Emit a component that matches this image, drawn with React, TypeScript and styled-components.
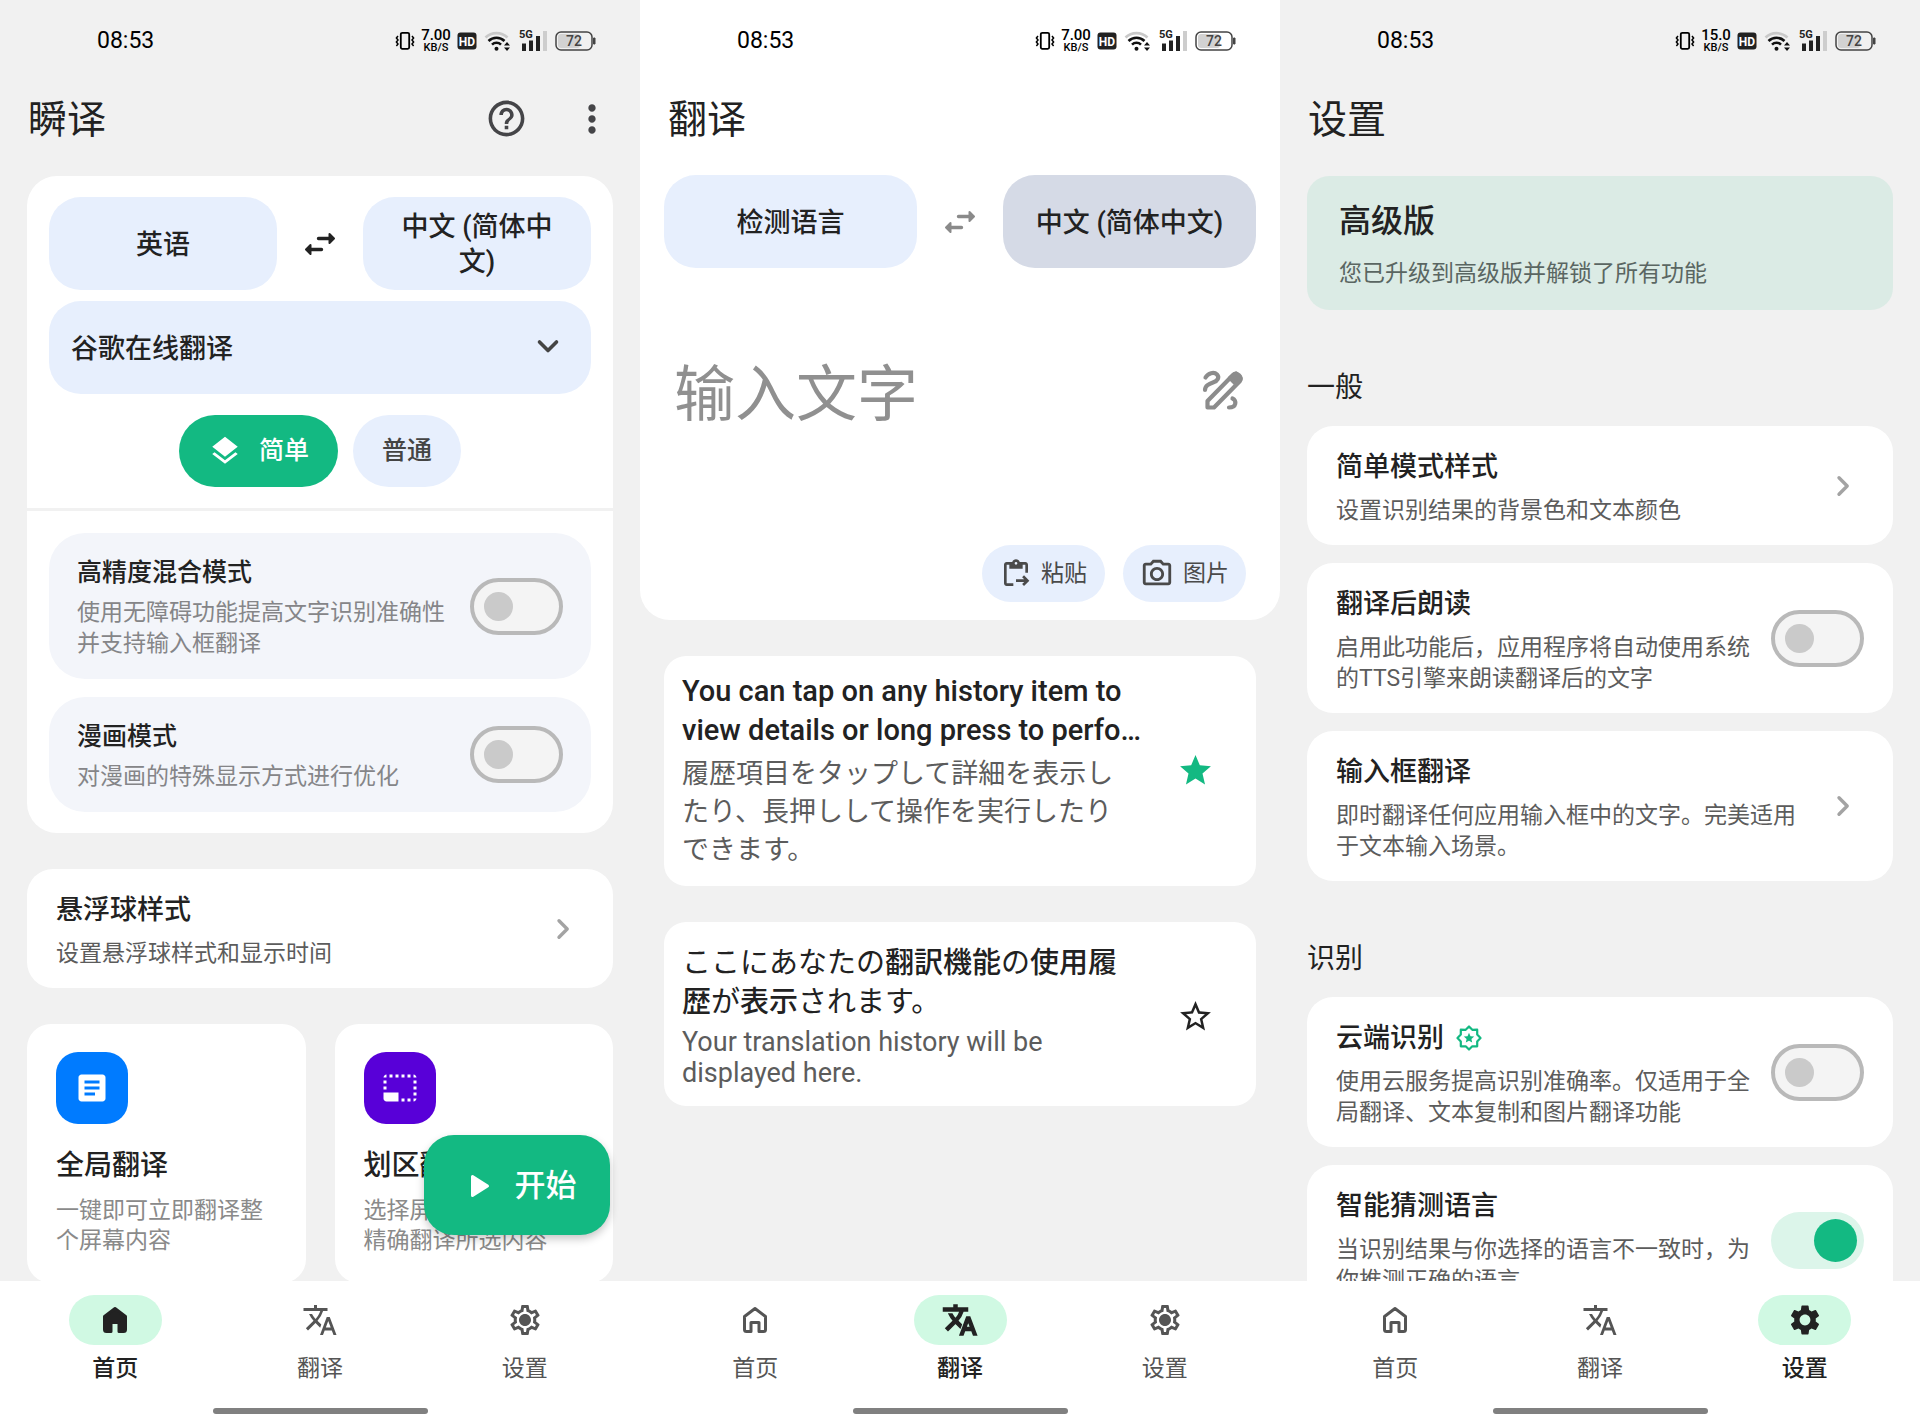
import React from 'react';
import styled, { createGlobalStyle, css } from 'styled-components';
import {
  MdArticle,
  MdContentPasteGo,
  MdHelpOutline,
  MdLayers,
  MdMoreVert,
  MdOutlinePhotoCamera,
  MdOutlineSettings,
  MdPhotoSizeSelectSmall,
  MdSettings,
  MdStar,
  MdStarBorder,
  MdTranslate,
} from 'react-icons/md';

const color = {
  page: '#f1f1f1',
  surface: '#ffffff',
  tint: '#e7effd',
  tintDim: '#d5dae6',
  soft: '#f3f5fa',
  green: '#13b982',
  mint: '#d0f9e3',
  ink: '#222222',
  body: '#5c5c5c',
  muted: '#858588',
  hint: '#909090',
};

const GlobalStyle = createGlobalStyle`
  *, *::before, *::after { box-sizing: border-box; }
  body {
    margin: 0;
    background: ${color.page};
    color: ${color.ink};
    font-family: Roboto, 'Noto Sans CJK SC', sans-serif;
  }
  button, input, select, textarea { font: inherit; color: inherit; }
  button { border: 0; padding: 0; background: none; cursor: pointer; }
  h1, h2, h3, p { margin: 0; font-weight: 400; }
  svg { display: block; flex: none; }
`;

/* ---------- shell ---------- */

const Screens = styled.main`
  display: grid;
  grid-template-columns: repeat(3, minmax(0, 1fr));
  height: 100vh;
`;

const Phone = styled.section`
  position: relative;
  display: flex;
  flex-direction: column;
  min-height: 0;
  background: ${color.page};
`;

const Top = styled.div<{ $white?: boolean }>`
  flex: none;
  background: ${(p) => (p.$white ? color.surface : 'transparent')};
`;

const StatusBar = styled.div`
  display: flex;
  align-items: center;
  justify-content: space-between;
  height: 82px;
  padding: 0 44px 0 97px;
  color: #000;
`;

const Clock = styled.time`
  font-size: 23px;
  line-height: 28px;
`;

const StatusIcons = styled.div`
  display: flex;
  align-items: center;
  gap: 7px;
`;

const Speed = styled.div`
  display: flex;
  flex-direction: column;
  align-items: center;
  width: 28px;
  font-weight: 500;
  font-size: 15px;
  line-height: 14px;
  small {
    font-size: 11px;
    line-height: 12px;
  }
`;

const Header = styled.header`
  display: flex;
  align-items: center;
  height: 76px;
  padding: 0 26px 0 28px;
`;

const Title = styled.h1`
  flex: 1;
  font-size: 39px;
  line-height: 48px;
`;

const IconButton = styled.button`
  display: flex;
  align-items: center;
  justify-content: center;
  color: #454548;
`;

const HeaderActions = styled.div`
  display: flex;
  align-items: center;
  gap: 42px;
  padding-bottom: 3px;
`;

const Content = styled.div<{ $gap?: number }>`
  flex: 1;
  display: flex;
  flex-direction: column;
  gap: ${(p) => p.$gap ?? 36}px;
  min-height: 0;
  padding: 18px 27px 0;
  overflow: hidden auto;
  scrollbar-width: none;
`;

/* ---------- navigation ---------- */

const Nav = styled.nav`
  flex: none;
  display: flex;
  flex-wrap: wrap;
  align-content: flex-start;
  height: 142px;
  padding: 14px 13px 0;
  background: ${color.surface};
`;

const NavItem = styled.a<{ $active?: boolean }>`
  flex: 1 0 33%;
  display: flex;
  flex-direction: column;
  align-items: center;
  gap: 8px;
  height: 94px;
  color: ${(p) => (p.$active ? color.ink : '#555')};
  text-decoration: none;
  font-size: 23px;
  line-height: 32px;
  font-weight: ${(p) => (p.$active ? 500 : 400)};
`;

const NavPill = styled.span<{ $active?: boolean }>`
  display: flex;
  align-items: center;
  justify-content: center;
  width: 93px;
  height: 50px;
  border-radius: 25px;
  background: ${(p) => (p.$active ? color.mint : 'transparent')};
  path[fill='none'] {
    stroke: none;
  }
`;

const HomeIndicator = styled.div`
  width: 215px;
  height: 6px;
  margin: 19px auto 0;
  border-radius: 3px;
  background: #808080;
`;

/* ---------- shared controls ---------- */

const LangRow = styled.div`
  display: grid;
  grid-template-columns: minmax(0, 1fr) 86px minmax(0, 1fr);
  align-items: center;
`;

const LangButton = styled.button<{ $dim?: boolean }>`
  height: 93px;
  padding: 3px 32px 0;
  border-radius: 32px;
  background: ${(p) => (p.$dim ? color.tintDim : color.tint)};
  font-weight: 500;
  font-size: 27px;
  line-height: 35px;
`;

const SwapButton = styled.button<{ $muted?: boolean }>`
  display: flex;
  justify-content: center;
  color: ${(p) => (p.$muted ? '#8a8a8a' : color.ink)};
`;

const Switch = styled.input`
  appearance: none;
  flex: none;
  display: flex;
  align-items: center;
  width: 93px;
  height: 57px;
  margin: 0;
  padding: 0 10px;
  border: 4px solid #b9b9b9;
  border-radius: 29px;
  background: #f4f4f4;
  &::before {
    content: '';
    width: 29px;
    height: 29px;
    border-radius: 50%;
    background: #cacaca;
  }
  &:checked {
    justify-content: flex-end;
    padding: 0 7px;
    border: 0;
    background: #dcf5ea;
  }
  &:checked::before {
    width: 43px;
    height: 43px;
    background: ${color.green};
  }
`;

/* ---------- home screen ---------- */

const Panel = styled.section`
  flex: none;
  border-radius: 30px;
  background: ${color.surface};
`;

const PanelTop = styled.div`
  display: flex;
  flex-direction: column;
  padding: 21px 22px 21px;
  border-bottom: 3px solid ${color.page};
`;

const PanelBottom = styled.div`
  display: flex;
  flex-direction: column;
  gap: 18px;
  padding: 22px 22px 21px;
`;

const EngineBox = styled.label`
  position: relative;
  display: block;
  margin: 11px 0 21px;
  svg {
    position: absolute;
    top: 33px;
    right: 31px;
    color: #444;
    pointer-events: none;
  }
`;

const EngineSelect = styled.select`
  appearance: none;
  display: block;
  width: 100%;
  height: 93px;
  padding: 3px 22px 0;
  border: 0;
  border-radius: 32px;
  background: ${color.tint};
  font-weight: 500;
  font-size: 27px;
  line-height: 36px;
`;

const Modes = styled.div`
  display: flex;
  justify-content: center;
  gap: 15px;
`;

const ModeButton = styled.button<{ $active?: boolean }>`
  display: flex;
  align-items: center;
  gap: 17px;
  height: 72px;
  padding: 0 29px;
  border-radius: 36px;
  background: ${(p) => (p.$active ? color.green : color.tint)};
  color: ${(p) => (p.$active ? '#fff' : '#444')};
  font-weight: 500;
  font-size: 25px;
  line-height: 34px;
`;

const OptionBox = styled.label`
  display: flex;
  align-items: center;
  gap: 20px;
  padding: 20px 28px;
  border-radius: 36px;
  background: ${color.soft};
`;

const Grow = styled.span`
  flex: 1;
  min-width: 0;
  padding-top: 4px;
`;

const OptionTitle = styled.span`
  display: block;
  font-weight: 500;
  font-size: 25px;
  line-height: 32px;
`;

const OptionText = styled.span`
  display: block;
  margin-top: 8px;
  color: ${color.muted};
  font-size: 23px;
  line-height: 31px;
`;

const Features = styled.div`
  flex: none;
  display: grid;
  grid-template-columns: repeat(2, minmax(0, 1fr));
  gap: 29px;
`;

const FeatureCard = styled.button`
  display: block;
  padding: 28px 29px 27px;
  border-radius: 24px;
  background: ${color.surface};
  text-align: left;
`;

const Tile = styled.span<{ $bg: string }>`
  display: flex;
  align-items: center;
  justify-content: center;
  width: 72px;
  height: 72px;
  border-radius: 22px;
  background: ${(p) => p.$bg};
  color: #fff;
`;

const FeatureTitle = styled.span`
  display: block;
  margin-top: 24px;
  font-weight: 500;
  font-size: 28px;
  line-height: 36px;
`;

const FeatureText = styled.span`
  display: block;
  margin-top: 12px;
  color: #8a8a8a;
  font-size: 23px;
  line-height: 30px;
`;

const StartButton = styled.button`
  position: absolute;
  right: 30px;
  bottom: 188px;
  display: flex;
  align-items: center;
  justify-content: center;
  gap: 25px;
  width: 186px;
  height: 100px;
  padding: 2px 0 0 12px;
  border-radius: 30px;
  background: ${color.green};
  box-shadow: 0 4px 8px rgba(0, 0, 0, 0.22);
  color: #fff;
  font-weight: 500;
  font-size: 31px;
  line-height: 42px;
`;

/* ---------- setting rows ---------- */

const rowLayout = css`
  flex: none;
  display: flex;
  align-items: center;
  gap: 20px;
  width: 100%;
  padding: 19px 29px;
  border-radius: 26px;
  background: ${color.surface};
  text-align: left;
`;

const LinkRow = styled.button`
  ${rowLayout}
  padding-right: 43px;
  svg {
    color: #a3a3a3;
  }
`;

const SwitchRow = styled.label`
  ${rowLayout}
`;

const RowTitle = styled.span`
  display: flex;
  align-items: center;
  gap: 12px;
  font-weight: 500;
  font-size: 27px;
  line-height: 36px;
`;

const RowText = styled.span`
  display: block;
  margin-top: 10px;
  color: ${color.body};
  font-size: 23px;
  line-height: 31px;
`;

const SettingsGroup = styled.section`
  flex: none;
  display: flex;
  flex-direction: column;
  gap: 18px;
`;

const GroupTitle = styled.h2`
  margin-top: 58px;
  font-size: 28px;
  line-height: 40px;
`;

const Premium = styled.section`
  flex: none;
  padding: 23px 32px 20px;
  border-radius: 22px;
  background: #dbebe5;
`;

const PremiumTitle = styled.h2`
  font-weight: 500;
  font-size: 32px;
  line-height: 44px;
`;

const PremiumText = styled.p`
  margin-top: 15px;
  color: #5a6662;
  font-size: 23px;
  line-height: 32px;
`;

/* ---------- translate screen ---------- */

const Composer = styled.section`
  flex: none;
  padding: 17px 24px 18px;
  border-radius: 0 0 30px 30px;
  background: ${color.surface};
`;

const InputRow = styled.div`
  display: flex;
  align-items: flex-start;
  gap: 20px;
  margin-top: 87px;
  padding: 0 12px 0 10px;
`;

const TextInput = styled.textarea`
  flex: 1;
  min-width: 0;
  height: 190px;
  padding: 0;
  border: 0;
  outline: 0;
  resize: none;
  background: none;
  font-size: 61px;
  line-height: 80px;
  &::placeholder {
    color: ${color.hint};
    opacity: 1;
  }
`;

const DrawButton = styled(IconButton)`
  margin-top: 14px;
  color: #8c8c8c;
`;

const Actions = styled.div`
  display: flex;
  justify-content: flex-end;
  gap: 18px;
  padding-right: 10px;
`;

const ActionButton = styled.button`
  display: flex;
  align-items: center;
  justify-content: center;
  gap: 9px;
  width: 123px;
  height: 57px;
  border-radius: 29px;
  background: ${color.tint};
  color: #4a4a4a;
  font-size: 23px;
  line-height: 32px;
`;

const History = styled.div`
  flex: 1;
  display: flex;
  flex-direction: column;
  gap: 36px;
  min-height: 0;
  padding: 36px 24px 0;
  overflow: hidden auto;
  scrollbar-width: none;
`;

const HistoryCard = styled.article<{ $pad: number }>`
  flex: none;
  display: grid;
  grid-template-columns: minmax(0, 463px) 37px;
  align-items: center;
  justify-content: space-between;
  padding: ${(p) => p.$pad}px 42px 17px 18px;
  border-radius: 22px;
  background: ${color.surface};
`;

const Source = styled.p<{ $light?: boolean }>`
  font-family: Roboto, 'Noto Sans CJK JP', sans-serif;
  font-weight: ${(p) => (p.$light ? 400 : 500)};
  font-size: 29px;
  line-height: 39px;
`;

const Kanji = styled.span`
  font-weight: 500;
`;

const Result = styled.p<{ $line: number }>`
  margin-top: 5px;
  padding-right: 24px;
  color: ${color.body};
  font-family: Roboto, 'Noto Sans CJK JP', sans-serif;
  font-size: 27px;
  line-height: ${(p) => p.$line}px;
`;

const StarButton = styled.button<{ $on?: boolean }>`
  color: ${(p) => (p.$on ? color.green : color.ink)};
`;

/* ---------- drawings ---------- */

const VibrateIcon = () => (
  <svg width="20" height="20" viewBox="0 0 20 20" fill="none" stroke="#000" aria-hidden="true">
    <rect x="5.8" y="1.8" width="8.4" height="16" rx="1.5" strokeWidth="1.8" />
    <path d="M3 5l-1.6 2L3 9l-1.6 2L3 13l-1.6 2M17 5l1.6 2L17 9l1.6 2-1.6 2 1.6 2" strokeWidth="1.5" />
  </svg>
);

const HdIcon = () => (
  <svg width="20" height="18" viewBox="0 0 20 18" aria-label="HD">
    <rect x="0.5" y="0.5" width="19" height="17" rx="3" fill="#222" />
    <text x="10" y="13.5" textAnchor="middle" fontSize="12" fontWeight="700" fill="#fff">HD</text>
  </svg>
);

const WifiIcon = () => (
  <svg width="28" height="22" viewBox="0 0 28 22" fill="none" aria-hidden="true">
    <path d="M1.5 7.5a16 16 0 0 1 22 0" stroke="#c9c9c9" strokeWidth="2.6" />
    <path d="M4.5 11a11.5 11.5 0 0 1 16 0M8 14.6a6.500 6.500 0 0 1 9 0" stroke="#111" strokeWidth="2.6" />
    <circle cx="12.5" cy="18.8" r="2" fill="#111" />
    <path d="M20 15.500l3-3.500 3 3.500zM20 17.500l3 3.500 3-3.500z" fill="#111" />
  </svg>
);

const SignalIcon = () => (
  <svg width="29" height="24" viewBox="0 0 29 24" aria-label="5G">
    <text x="0" y="9" fontSize="11" fontWeight="700" fill="#222">5G</text>
    <path d="M3 14.500h4V22H3zM10 11.500h4V22h-4zM17 7h4v15h-4z" fill="#222" />
    <path d="M24 2h4v20h-4z" fill="#cdcdcd" />
  </svg>
);

const BatteryIcon = () => (
  <svg width="41" height="20" viewBox="0 0 41 20" aria-label="72%">
    <rect x="3" y="3" width="22" height="14" rx="3" fill="#d2d2d2" />
    <rect x="1" y="1" width="36" height="18" rx="5" fill="none" stroke="#444" strokeWidth="1.5" />
    <path d="M38.500 7h1.500v6h-1.500z" fill="#444" stroke="#444" />
    <text x="19" y="15" textAnchor="middle" fontSize="14" fontWeight="500" fill="#444">72</text>
  </svg>
);

const SwapIcon = () => (
  <svg width="32" height="26" viewBox="0 0 32 26" fill="currentColor" stroke="currentColor" strokeLinejoin="round" strokeLinecap="round" aria-hidden="true">
    <path d="M14.500 7.500H26M6 18.500h11.500" strokeWidth="3.4" />
    <path d="M25.500 3l4.500 4.500-4.500 4.500zM6.500 14L2 18.500 6.500 23z" strokeWidth="2" />
  </svg>
);

const ChevronDown = () => (
  <svg width="24" height="24" viewBox="0 0 24 24" fill="none" stroke="currentColor" strokeWidth="3.6" strokeLinecap="round" strokeLinejoin="round" aria-hidden="true">
    <path d="M3.500 8l8.500 8.500L20.500 8" />
  </svg>
);

const ChevronRight = () => (
  <svg width="14" height="24" viewBox="0 0 14 24" fill="none" stroke="currentColor" strokeWidth="3.4" strokeLinecap="round" strokeLinejoin="round" aria-hidden="true">
    <path d="M3 3.800l8.200 8.200L3 20.200" />
  </svg>
);

const PlayIcon = () => (
  <svg width="20" height="24" viewBox="0 0 20 24" fill="#fff" stroke="#fff" strokeWidth="3" strokeLinejoin="round" aria-hidden="true">
    <path d="M2.500 2.500v19L17.500 12z" />
  </svg>
);

const DrawIcon = () => (
  <svg width="42" height="42" viewBox="0 0 42 42" fill="none" stroke="currentColor" strokeWidth="4.2" strokeLinecap="round" strokeLinejoin="round" aria-hidden="true">
    <path d="M3.500 8.500c2.500-4.500 8.500-6 11.500-3 2.800 3 .5 6.300-3.500 7.800C7 15 3 16.500 3 21" />
    <path d="M5.500 38.500v-6.500L31.500 5.500c3-2.800 9.500 3 6.500 6.500L12 38.500z" />
    <path d="M28 9l6-4.500 4.500 5L34 15z" fill="currentColor" />
    <path d="M30.500 29.500c4.500 1.800 4 9-3.500 9" />
  </svg>
);

const HomeIcon = ({ filled }: { filled?: boolean }) => (
  <svg width="28" height="28" viewBox="0 0 28 28" fill={filled ? 'currentColor' : 'none'} stroke="currentColor" strokeWidth="3" strokeLinejoin="round" aria-hidden="true">
    <path d="M3.500 10.500L14 2.500l10.500 8v13q0 2-2 2H18v-9h-8v9H5.500q-2 0-2-2z" />
  </svg>
);

const GearIcon = ({ filled }: { filled?: boolean }) =>
  filled ? (
    <MdSettings size={36} />
  ) : (
    <svg width="36" height="36" viewBox="0 0 36 36" aria-hidden="true">
      <MdOutlineSettings size={36} />
      <circle cx="18" cy="18" r="5" fill="currentColor" />
    </svg>
  );

const BadgeIcon = () => (
  <svg width="26" height="26" viewBox="0 0 26 26" fill="none" stroke={color.green} strokeWidth="2.2" strokeLinejoin="round" aria-hidden="true">
    <path d="M13 1.500l3.300 3.300 4.900-.1v4.900l3.300 3.400-3.300 3.400v4.900h-4.900L13 24.500l-3.300-3.200H4.800v-4.900L1.500 13l3.300-3.400V4.700l4.900.1z" />
    <path d="M13 7.800l1.500 3.400 3.700.3-2.800 2.500.8 3.600-3.200-1.900-3.200 1.900.8-3.600-2.800-2.500 3.700-.3z" fill={color.green} stroke="none" />
  </svg>
);

/* ---------- composed parts ---------- */

const Status = ({ speed }: { speed: string }) => (
  <StatusBar>
    <Clock>08:53</Clock>
    <StatusIcons>
      <VibrateIcon />
      <Speed>
        {speed}
        <small>KB/S</small>
      </Speed>
      <HdIcon />
      <WifiIcon />
      <SignalIcon />
      <BatteryIcon />
    </StatusIcons>
  </StatusBar>
);

type Tab = 'home' | 'translate' | 'settings';

const tabs: { id: Tab; label: string }[] = [
  { id: 'home', label: '首页' },
  { id: 'translate', label: '翻译' },
  { id: 'settings', label: '设置' },
];

const TabIcon = ({ id, active }: { id: Tab; active: boolean }) => {
  if (id === 'home') return <HomeIcon filled={active} />;
  if (id === 'settings') return <GearIcon filled={active} />;
  return <MdTranslate size={36} stroke="currentColor" strokeWidth={active ? 1 : 0} />;
};

const BottomNav = ({ current }: { current: Tab }) => (
  <Nav>
    {tabs.map(({ id, label }) => (
      <NavItem key={id} href={`#${id}`} $active={id === current}>
        <NavPill $active={id === current}>
          <TabIcon id={id} active={id === current} />
        </NavPill>
        {label}
      </NavItem>
    ))}
    <HomeIndicator />
  </Nav>
);

const NavRow = ({ title, text }: { title: string; text: string }) => (
  <LinkRow type="button">
    <Grow>
      <RowTitle>{title}</RowTitle>
      <RowText>{text}</RowText>
    </Grow>
    <ChevronRight />
  </LinkRow>
);

const ToggleRow = ({ title, text, on, badge }: { title: string; text: string; on?: boolean; badge?: boolean }) => (
  <SwitchRow>
    <Grow>
      <RowTitle>
        {title}
        {badge && <BadgeIcon />}
      </RowTitle>
      <RowText>{text}</RowText>
    </Grow>
    <Switch type="checkbox" defaultChecked={on} />
  </SwitchRow>
);

const Option = ({ title, text }: { title: string; text: string }) => (
  <OptionBox>
    <Grow>
      <OptionTitle>{title}</OptionTitle>
      <OptionText>{text}</OptionText>
    </Grow>
    <Switch type="checkbox" />
  </OptionBox>
);

const HomeScreen = () => (
  <Phone>
    <Top>
      <Status speed="7.00" />
      <Header>
        <Title>瞬译</Title>
        <HeaderActions>
          <IconButton type="button" aria-label="帮助">
            <MdHelpOutline size={43} />
          </IconButton>
          <IconButton type="button" aria-label="更多">
            <MdMoreVert size={44} />
          </IconButton>
        </HeaderActions>
      </Header>
    </Top>
    <Content>
      <Panel>
        <PanelTop>
          <LangRow>
            <LangButton type="button">英语</LangButton>
            <SwapButton type="button" aria-label="交换语言">
              <SwapIcon />
            </SwapButton>
            <LangButton type="button">中文 (简体中文)</LangButton>
          </LangRow>
          <EngineBox>
            <EngineSelect aria-label="翻译引擎">
              <option>谷歌在线翻译</option>
            </EngineSelect>
            <ChevronDown />
          </EngineBox>
          <Modes>
            <ModeButton type="button" $active>
              <MdLayers size={34} />
              简单
            </ModeButton>
            <ModeButton type="button">普通</ModeButton>
          </Modes>
        </PanelTop>
        <PanelBottom>
          <Option title="高精度混合模式" text="使用无障碍功能提高文字识别准确性并支持输入框翻译" />
          <Option title="漫画模式" text="对漫画的特殊显示方式进行优化" />
        </PanelBottom>
      </Panel>
      <NavRow title="悬浮球样式" text="设置悬浮球样式和显示时间" />
      <Features>
        <FeatureCard type="button">
          <Tile $bg="#007bff">
            <MdArticle size={36} />
          </Tile>
          <FeatureTitle>全局翻译</FeatureTitle>
          <FeatureText>一键即可立即翻译整个屏幕内容</FeatureText>
        </FeatureCard>
        <FeatureCard type="button">
          <Tile $bg="#5800d8">
            <MdPhotoSizeSelectSmall size={36} />
          </Tile>
          <FeatureTitle>划区翻译</FeatureTitle>
          <FeatureText>选择屏幕上的区域，精确翻译所选内容</FeatureText>
        </FeatureCard>
      </Features>
    </Content>
    <StartButton type="button">
      <PlayIcon />
      开始
    </StartButton>
    <BottomNav current="home" />
  </Phone>
);

const TranslateScreen = () => (
  <Phone>
    <Top $white>
      <Status speed="7.00" />
      <Header>
        <Title>翻译</Title>
      </Header>
    </Top>
    <Composer>
      <LangRow>
        <LangButton type="button">检测语言</LangButton>
        <SwapButton type="button" aria-label="交换语言" $muted>
          <SwapIcon />
        </SwapButton>
        <LangButton type="button" $dim>
          中文 (简体中文)
        </LangButton>
      </LangRow>
      <InputRow>
        <TextInput aria-label="输入文字" placeholder="输入文字" />
        <DrawButton type="button" aria-label="手写">
          <DrawIcon />
        </DrawButton>
      </InputRow>
      <Actions>
        <ActionButton type="button">
          <MdContentPasteGo size={32} />
          粘贴
        </ActionButton>
        <ActionButton type="button">
          <MdOutlinePhotoCamera size={34} />
          图片
        </ActionButton>
      </Actions>
    </Composer>
    <History>
      <HistoryCard $pad={16}>
        <div>
          <Source lang="en">You can tap on any history item to view details or long press to perfo…</Source>
          <Result lang="ja" $line={38}>
            履歴項目をタップして詳細を表示したり、長押しして操作を実行したりできます。
          </Result>
        </div>
        <StarButton type="button" aria-label="取消收藏" $on>
          <MdStar size={37} />
        </StarButton>
      </HistoryCard>
      <HistoryCard $pad={22}>
        <div>
          <Source lang="ja" $light>
            ここにあなたの<Kanji>翻訳機能</Kanji>の<Kanji>使用履歴</Kanji>が<Kanji>表示</Kanji>されます。
          </Source>
          <Result lang="en" $line={31}>
            Your translation history will be displayed here.
          </Result>
        </div>
        <StarButton type="button" aria-label="收藏">
          <MdStarBorder size={37} />
        </StarButton>
      </HistoryCard>
    </History>
    <BottomNav current="translate" />
  </Phone>
);

const SettingsScreen = () => (
  <Phone>
    <Top>
      <Status speed="15.0" />
      <Header>
        <Title>设置</Title>
      </Header>
    </Top>
    <Content $gap={0}>
      <Premium>
        <PremiumTitle>高级版</PremiumTitle>
        <PremiumText>您已升级到高级版并解锁了所有功能</PremiumText>
      </Premium>
      <SettingsGroup>
        <GroupTitle>一般</GroupTitle>
        <NavRow title="简单模式样式" text="设置识别结果的背景色和文本颜色" />
        <ToggleRow title="翻译后朗读" text="启用此功能后，应用程序将自动使用系统的TTS引擎来朗读翻译后的文字" />
        <NavRow title="输入框翻译" text="即时翻译任何应用输入框中的文字。完美适用于文本输入场景。" />
      </SettingsGroup>
      <SettingsGroup>
        <GroupTitle>识别</GroupTitle>
        <ToggleRow badge title="云端识别" text="使用云服务提高识别准确率。仅适用于全局翻译、文本复制和图片翻译功能" />
        <ToggleRow on title="智能猜测语言" text="当识别结果与你选择的语言不一致时，为你推测正确的语言" />
      </SettingsGroup>
    </Content>
    <BottomNav current="settings" />
  </Phone>
);

export default function App() {
  return (
    <>
      <GlobalStyle />
      <Screens>
        <HomeScreen />
        <TranslateScreen />
        <SettingsScreen />
      </Screens>
    </>
  );
}
